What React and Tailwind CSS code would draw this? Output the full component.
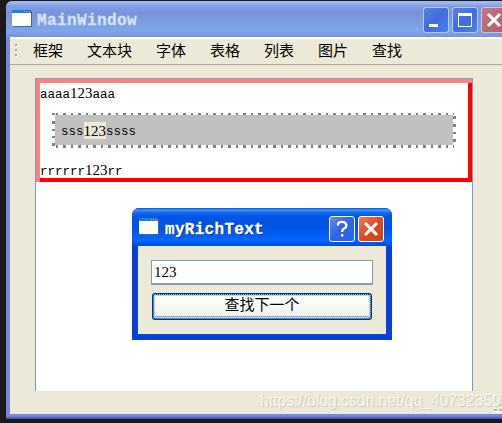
import React from "react";

const MENU = ["框架", "文本块", "字体", "表格", "列表", "图片", "查找"];

function AppIcon() {
  return (
    <svg width="20" height="17" viewBox="0 0 20 17" shapeRendering="crispEdges" className="mb-px shrink-0">
      <rect x="1" y="1" width="19" height="16" fill="#45629f" />
      <rect x="0" y="0" width="19" height="16" fill="#fffffa" />
      <rect x="0" y="0" width="19" height="3" fill="#1680de" />
      <rect x="12" y="1" width="1" height="1" fill="#7db9ee" />
      <rect x="14" y="1" width="1" height="1" fill="#7db9ee" />
      <rect x="16" y="1" width="2" height="2" fill="#ef672d" />
    </svg>
  );
}

function Glyph({ kind }) {
  return (
    <svg width="26" height="26" viewBox="0 0 26 26" className="block shrink-0" fill="none" stroke="#fff">
      {kind === "min" && <rect x="6" y="17" width="9" height="3" fill="#fff" stroke="none" />}
      {kind === "max" && <path d="M6 6H20V20H6ZM7 9V19H19V9Z" fill="#fff" fillRule="evenodd" stroke="none" />}
      {kind === "close" && <path d="M7 7L19 19M19 7L7 19" strokeWidth="3" />}
      {kind === "help" && (
        <path d="M9 9.5V8Q9.5 5.8 13 5.8T17.5 9Q17.5 11.3 15.5 12.3T13.2 15V16M13.2 18V20.5" strokeWidth="2.3" />
      )}
    </svg>
  );
}

function DottedFrame() {
  return (
    <svg width="404" height="35" viewBox="0 0 404 35" className="absolute left-0 top-0" shapeRendering="crispEdges" stroke="#808080" fill="none">
      <path d="M4 1H402" strokeWidth="2" strokeDasharray="2 5 3 5" />
      <path d="M4 33.5H402" strokeWidth="3" strokeDasharray="2 5 3 5" />
      <path d="M1.5 0V35" strokeWidth="3" strokeDasharray="2 6 3 5 2 5 2 5 3 3" />
      <path d="M402.5 3V35" strokeWidth="3" strokeDasharray="3 5 3 5 2 5 3 9" />
    </svg>
  );
}

function Digits({ className = "" }) {
  return <span className={`font-['Liberation_Serif',serif] text-[15px] ${className}`}>123</span>;
}

export default function App() {
  return (
    <div className="relative h-[423px] w-[502px] overflow-hidden bg-[#1b191b] pl-[6px] pt-px font-['Liberation_Mono','Noto_Sans_CJK_SC',monospace] text-black">
      <div className="flex h-[418px] w-[506px] flex-col rounded-tl-[6px] bg-[#7788dc]">
        <div className="flex h-9 shrink-0 items-center rounded-tl-[6px] bg-[linear-gradient(#9eb6ed_0,#9eb6ed_2px,#829de3_5px,#7893dc_12px,#7a9be2_20px,#80a5e9_30px,#7895df_35px)] pl-[6px]">
          <AppIcon />
          <span className="ml-[5px] mt-[4px] w-[386px] whitespace-nowrap text-[16px] font-bold tracking-[0.4px] text-[#d6e1fa] [-webkit-text-stroke:0.3px_#d6e1fa]">MainWindow</span>
          <div className="mt-px flex gap-[3px]">
            <span className="box-content size-6 rounded-[3px] border border-[#b4c9f4] bg-[linear-gradient(135deg,#5d80df,#3f6ce0_50%,#4d82ed)]"><span className="-m-px block"><Glyph kind="min" /></span></span>
            <span className="box-content size-6 rounded-[3px] border border-[#b4c9f4] bg-[linear-gradient(135deg,#5d80df,#3f6ce0_50%,#4d82ed)]"><span className="-m-px block"><Glyph kind="max" /></span></span>
            <span className="box-content size-6 rounded-[3px] border border-[#c9c4e2] bg-[linear-gradient(135deg,#c27782,#b15b66)]"><span className="-m-px block"><Glyph kind="close" /></span></span>
          </div>
        </div>
        <div className="ml-1 h-[377px] bg-[#ece9d8]">
          <div className="flex h-[28px] items-center border-b border-t-2 border-b-[#aca899] border-t-[#fffffa] pl-[5px]">
            <svg width="4" height="15" shapeRendering="crispEdges">
              <path d="M1 1h2v2h-2zM1 6h2v2h-2zM1 11h2v2h-2z" fill="#fff" />
              <path d="M0 0h2v2h-2zM0 5h2v2h-2zM0 10h2v2h-2z" fill="#aaa797" />
            </svg>
            <div className="ml-[14px] flex gap-6 pt-[2px] text-[15px] leading-[24px]">
              {MENU.map((m) => <span key={m} className="whitespace-nowrap">{m}</span>)}
            </div>
          </div>
          <div className="ml-[25px] mt-[13px] h-[313px] w-[438px] border-x border-t border-[#7f9db9] bg-white">
            <div className="h-[103px] p-1 text-[12.5px] leading-[15px] shadow-[inset_4px_0_#ff8080,inset_0_4px_#ff8080,inset_-4px_0_#f00,inset_0_-4px_#f00]">
              <div className="h-[18px] pt-[3px]">aaaa<Digits />aaa</div>
              <div className="relative ml-3 mt-3 h-[35px] w-[404px]">
                <div className="absolute left-[3px] top-[2px] h-[30px] w-[398px] bg-[#c0c0c0]" />
                <DottedFrame />
                <div className="relative flex pl-[9px] pt-[9px] leading-[17px]"><span className="pt-[2px]">sss</span><Digits className="h-[17px] bg-[#ece9d8] pt-px" /><span className="pt-[2px]">ssss</span></div>
              </div>
              <div className="pt-[15px]">rrrrrr<Digits />rr</div>
            </div>
          </div>
        </div>
        <div className="h-[5px] bg-[linear-gradient(#7788dc_0,#7788dc_2px,#666fcb_3px,#454ab0_5px)]" />
      </div>

      <div className="absolute left-[132px] top-[208px] flex h-[132px] w-[260px] flex-col rounded-t-[7px] border-x-[5px] border-b-[5px] border-[#0840d8] bg-[#ece9d8] shadow-[inset_0_0_0_1px_#0048df]">
        <div className="-mx-[5px] flex h-[38px] shrink-0 items-center rounded-t-[7px] bg-[linear-gradient(#0a50d0_0,#3d95ff_2px,#1265ec_5px,#0054e3_9px,#0055e5_20px,#0267ff_32px,#0050dc_37px)] pl-[7px]">
          <AppIcon />
          <span className="ml-[6px] mt-[5px] w-[164px] whitespace-nowrap text-[16px] font-bold tracking-[0.3px] text-white [-webkit-text-stroke:0.3px_white] [text-shadow:1px_1px_#09237e]">myRichText</span>
          <div className="mt-[4px] flex gap-[3px]">
            <span className="box-content size-6 rounded-[3px] border border-white bg-[linear-gradient(135deg,#628cec,#2f64e1_50%,#2269f3)]"><span className="-m-px block"><Glyph kind="help" /></span></span>
            <span className="box-content size-6 rounded-[3px] border border-white bg-[linear-gradient(135deg,#e7805f,#df4a20_50%,#cf4414)]"><span className="-m-px block"><Glyph kind="close" /></span></span>
          </div>
        </div>
        <div className="pl-[14px] pt-[14px]">
          <div className="h-[25px] w-[222px] border border-b-2 border-[#7f9db9] bg-white pl-[2px] leading-[23px]"><Digits /></div>
          <div className="relative ml-px mt-2 flex h-[27px] w-[220px] items-center justify-center rounded-[3px] border-2 border-[#003c74] bg-[linear-gradient(#fff,#f1f0ea)] text-[15px] shadow-[inset_0_0_0_1px_#bdd2f5,inset_0_-2px_#88a5e8]">
            <span className="pointer-events-none absolute -inset-px rounded-[2px] border border-dotted border-[#a9c8f4]" />
            <span className="pt-[2px]">查找下一个</span>
          </div>
        </div>
      </div>

      <div className="absolute left-[260px] top-[391px] whitespace-nowrap font-['Liberation_Sans',sans-serif] text-[15.7px] leading-[19px] text-[#f6f5ef] [text-shadow:1px_1px_1px_#c9c7bc]">https://blog.csdn.net/qq_40732350</div>
      <svg className="absolute left-[494px] top-[405px]" width="8" height="8" shapeRendering="crispEdges">
        <path d="M1 5h3v3h-3zM6 5h2v3h-2zM6 1h2v2h-2z" fill="#fff" />
        <path d="M0 4h3v2h-3zM5 4h3v2h-3zM5 0h3v1h-3z" fill="#b8b4a3" />
      </svg>
    </div>
  );
}
